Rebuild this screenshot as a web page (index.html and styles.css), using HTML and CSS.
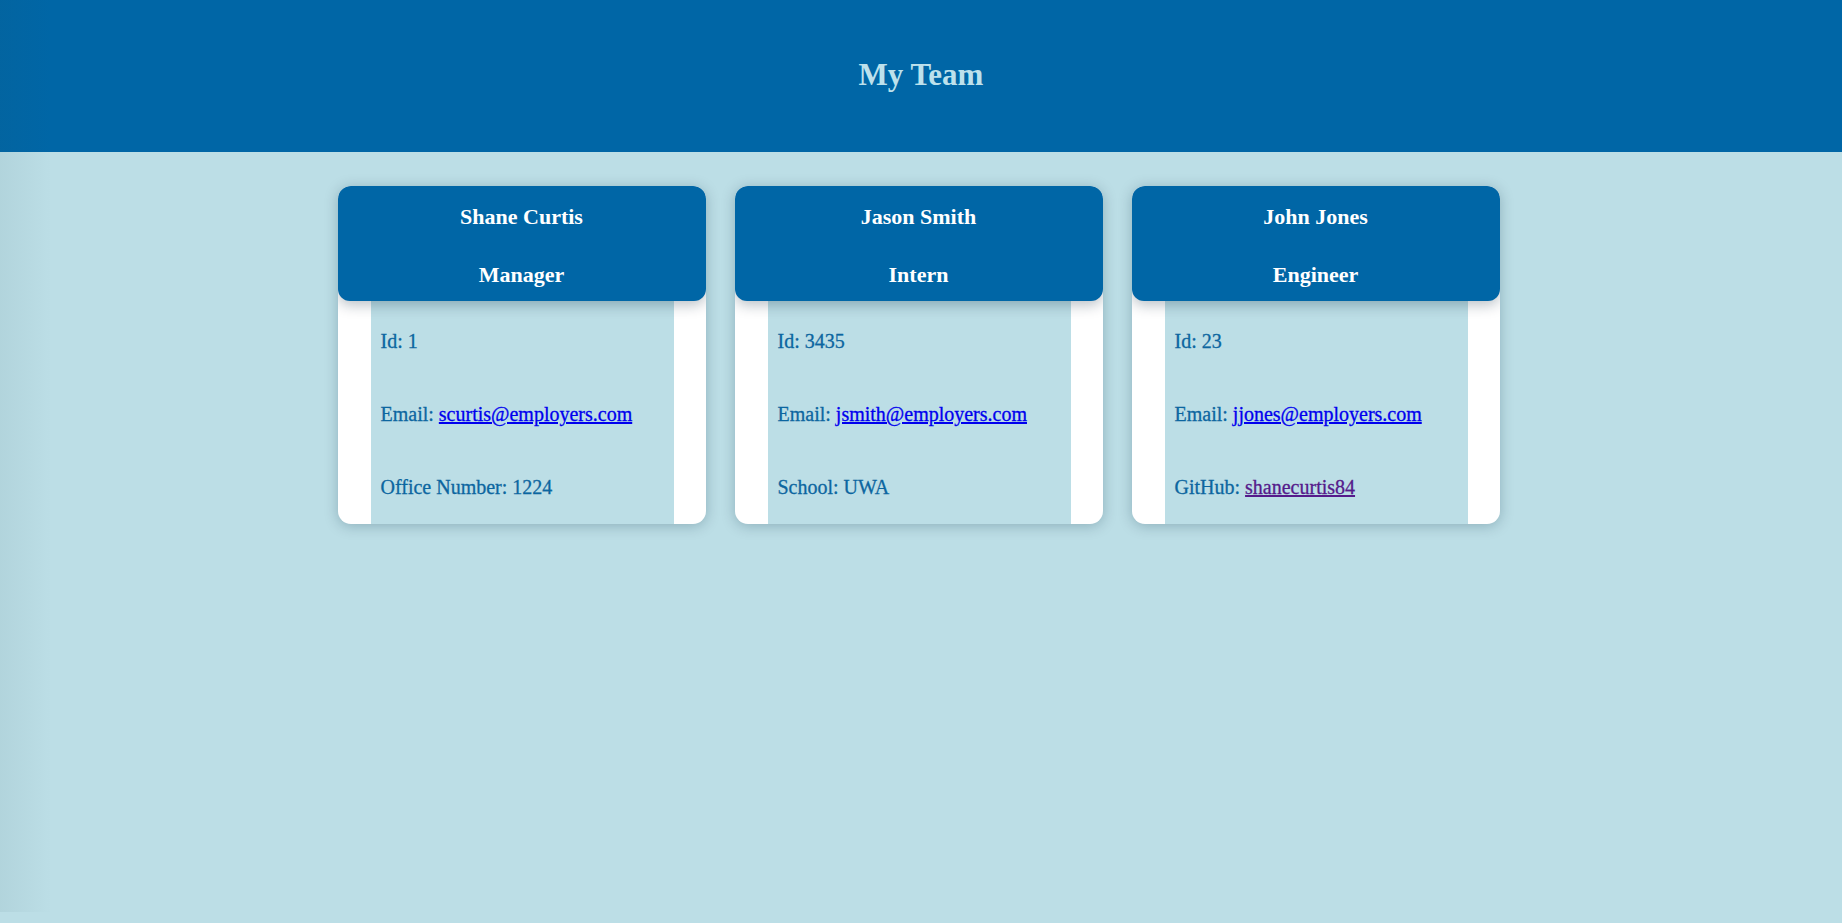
FILE: index.html
```html
<!DOCTYPE html>
<html lang="en">
<head>
<meta charset="utf-8">
<title>My Team</title>
<link rel="stylesheet" href="styles.css">
</head>
<body>
<div class="edge-shade"></div>
<header class="top-bar">
  <h1 class="title">My Team</h1>
</header>
<main class="team">
  <section class="card">
    <div class="card-header">
      <h2 class="card-name">Shane Curtis</h2>
      <h2 class="card-role">Manager</h2>
    </div>
    <ul class="card-body">
      <li class="card-item">Id: 1</li>
      <li class="card-item">Email: <a class="link" href="#">scurtis@employers.com</a></li>
      <li class="card-item">Office Number: 1224</li>
    </ul>
  </section>
  <section class="card">
    <div class="card-header">
      <h2 class="card-name">Jason Smith</h2>
      <h2 class="card-role">Intern</h2>
    </div>
    <ul class="card-body">
      <li class="card-item">Id: 3435</li>
      <li class="card-item">Email: <a class="link" href="#">jsmith@employers.com</a></li>
      <li class="card-item">School: UWA</li>
    </ul>
  </section>
  <section class="card">
    <div class="card-header">
      <h2 class="card-name">John Jones</h2>
      <h2 class="card-role">Engineer</h2>
    </div>
    <ul class="card-body">
      <li class="card-item">Id: 23</li>
      <li class="card-item">Email: <a class="link" href="#">jjones@employers.com</a></li>
      <li class="card-item">GitHub: <a class="link visited" href="#">shanecurtis84</a></li>
    </ul>
  </section>
</main>
</body>
</html>
```

FILE: styles.css
```css
html, body {
  margin: 0;
  padding: 0;
}

body {
  background: #bcdee6;
  min-height: 923px;
  font-family: "Liberation Serif", "Times New Roman", serif;
}

.edge-shade {
  position: absolute;
  left: 0;
  top: 0;
  width: 52px;
  height: 912px;
  background: linear-gradient(to right, rgba(40, 80, 90, 0.07), rgba(40, 80, 90, 0));
  pointer-events: none;
  z-index: 5;
}

.top-bar {
  background: #0066a6;
  height: 152px;
  display: flex;
  align-items: center;
  justify-content: center;
}

.title {
  margin: 0 0 4px;
  font-size: 31px;
  font-weight: bold;
  color: #bde1ec;
  line-height: 1;
}

.team {
  display: flex;
  justify-content: center;
  gap: 29px;
  padding-top: 34px;
  padding-right: 5px;
}

.card {
  width: 368px;
  background: #ffffff;
  border-radius: 13px;
  box-shadow: 0 2px 14px rgba(0, 40, 60, 0.25);
  overflow: hidden;
}

.card-header {
  background: #0066a6;
  border-radius: 12px;
  color: #ffffff;
  text-align: center;
  padding: 14px 0 9px;
  display: flex;
  flex-direction: column;
  gap: 24px;
  box-shadow: 0 4px 14px rgba(0, 30, 50, 0.28);
  position: relative;
}

.card-name,
.card-role {
  margin: 0;
  font-size: 22px;
  line-height: 34px;
  font-weight: bold;
}

.card-body {
  list-style: none;
  margin: 0 32px 0 33px;
  padding: 4px 10px 0;
  background: #bcdee6;
}

.card-item {
  font-size: 20px;
  line-height: 73px;
  color: #0c66a0;
  -webkit-text-stroke: 0.3px currentColor;
}

.link {
  color: #0000ee;
  text-decoration: underline;
}

.link.visited {
  color: #551a8b;
}
```
